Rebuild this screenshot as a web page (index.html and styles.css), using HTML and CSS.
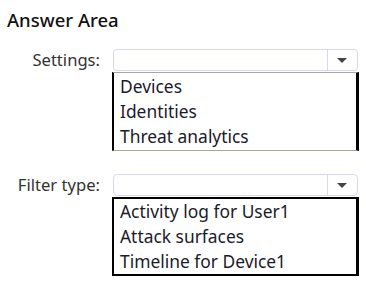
FILE: index.html
```html
<!DOCTYPE html>
<html lang="en">
<head>
    <meta charset="UTF-8">
    <title>Answer Area</title>
    <link rel="stylesheet" href="styles.css">
</head>
<body>
    <div class="area">
        <h1>Answer Area</h1>

        <div class="row">
            <label class="label">Settings:</label>
            <div class="field">
                <div class="select"><span class="arrow"></span></div>
                <ul class="options first">
                    <li>Devices</li>
                    <li>Identities</li>
                    <li>Threat analytics</li>
                </ul>
            </div>
        </div>

        <div class="row">
            <label class="label">Filter type:</label>
            <div class="field">
                <div class="select"><span class="arrow"></span></div>
                <ul class="options">
                    <li>Activity log for User1</li>
                    <li>Attack surfaces</li>
                    <li>Timeline for Device1</li>
                </ul>
            </div>
        </div>
    </div>
</body>
</html>
```

FILE: styles.css
```css
body {
    margin: 0;
    background-color: #fff;
    font-family: "Noto Sans", "Open Sans", sans-serif;
    color: #1a1a1a;
}
.area {
    padding: 7px 0 0 7px;
    display: flex;
    flex-direction: column;
    gap: 23px;
}
h1 {
    margin: 0 0 -6px 0;
    font-size: 18.5px;
    line-height: 25px;
    font-weight: 500;
    color: #111;
}
.row {
    display: grid;
    grid-template-columns: 93px 247px;
    column-gap: 12px;
}
.label {
    text-align: right;
    font-size: 16.6px;
    line-height: 22px;
    color: #333;
}
.select {
    height: 20px;
    border: 1px solid #d6d6f4;
    border-radius: 4px;
    margin-left: 1px;
    margin-right: 1px;
    position: relative;
}
.arrow {
    position: absolute;
    right: 0;
    top: 0;
    width: 29px;
    height: 20px;
    border-left: 1px solid #d6d6f4;
}
.arrow::after {
    content: "";
    position: absolute;
    left: 9px;
    top: 8px;
    border-left: 5px solid transparent;
    border-right: 5px solid transparent;
    border-top: 5px solid #444;
}
.options {
    list-style: none;
    margin: 1px 0 0 0;
    padding: 0 6px 0 6px;
    border: 2px solid #000;
    border-right-width: 3px;
    font-size: 17.4px;
    line-height: 25px;
    color: #1a1a2a;
}
.options.first {
    border-top: 1px solid #a8a898;
    border-bottom: 1px solid #a8a898;
    padding-top: 1px;
    padding-bottom: 1px;
}
```
